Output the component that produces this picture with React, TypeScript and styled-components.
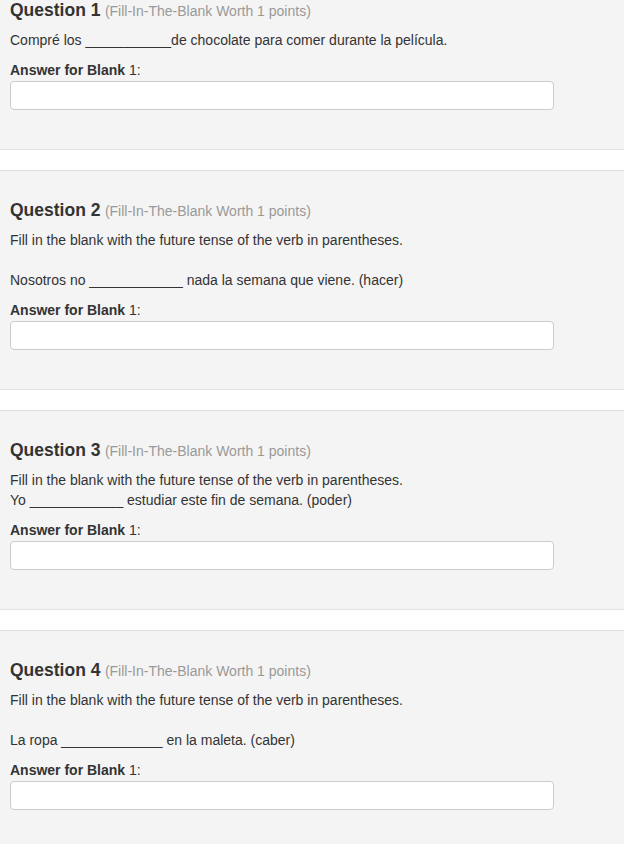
import { FC, ReactNode } from 'react';
import styled, { createGlobalStyle } from 'styled-components';

const GlobalStyle = createGlobalStyle`
  body {
    margin: 0;
    background: #ffffff;
    font-family: 'Liberation Sans', Arial, sans-serif;
    color: #333333;
  }
`;

const Page = styled.div`
  display: flex;
  flex-direction: column;
  gap: 20px;
`;

const Block = styled.section<{ $first?: boolean }>`
  background: #f4f4f4;
  border-top: ${(p) => (p.$first ? 'none' : '1px solid #dcdcdc')};
  border-bottom: 1px solid #e2e2e2;
  padding: ${(p) => (p.$first ? '0' : '29px')} 10px 39px;
  display: flex;
  flex-direction: column;
`;

const Heading = styled.div`
  line-height: 20px;
  height: 20px;
  white-space: nowrap;
`;

const QNumber = styled.span`
  font-size: 17.5px;
  font-weight: 700;
  color: #333333;
`;

const QMeta = styled.span`
  font-size: 14px;
  color: #999999;
`;

const Prompt = styled.div`
  margin-top: 10px;
  font-size: 14px;
  line-height: 20px;
  color: #333333;
`;

const Line = styled.p<{ $gap?: boolean }>`
  margin: 0;
  margin-top: ${(p) => (p.$gap ? '20px' : '0')};
  min-height: 20px;
`;

const Label = styled.div`
  margin-top: 10px;
  font-size: 14px;
  line-height: 20px;
  color: #333333;

  b {
    font-weight: 700;
  }
`;

const AnswerInput = styled.input`
  box-sizing: border-box;
  margin-top: 1px;
  width: 544px;
  height: 29px;
  border: 1px solid #cccccc;
  border-radius: 4px;
  background: #ffffff;
  padding: 4px 8px;
  font-family: inherit;
  font-size: 14px;
  outline: none;
`;

interface QuestionProps {
  num: number;
  first?: boolean;
  children: ReactNode;
}

const Question: FC<QuestionProps> = ({ num, first, children }) => (
  <Block $first={first}>
    <Heading>
      <QNumber>Question {num}</QNumber>{' '}
      <QMeta>(Fill-In-The-Blank Worth 1 points)</QMeta>
    </Heading>
    <Prompt>{children}</Prompt>
    <Label>
      <b>Answer for Blank</b> 1:
    </Label>
    <AnswerInput type="text" />
  </Block>
);

const instruction = 'Fill in the blank with the future tense of the verb in parentheses.';

export default function App() {
  return (
    <>
      <GlobalStyle />
      <Page>
        <Question num={1} first>
          <Line>Compré los ___________de chocolate para comer durante la película.</Line>
        </Question>
        <Question num={2}>
          <Line>{instruction}</Line>
          <Line $gap>Nosotros no ____________ nada la semana que viene. (hacer)</Line>
        </Question>
        <Question num={3}>
          <Line>{instruction}</Line>
          <Line>Yo ____________ estudiar este fin de semana. (poder)</Line>
        </Question>
        <Question num={4}>
          <Line>{instruction}</Line>
          <Line $gap>La ropa _____________ en la maleta. (caber)</Line>
        </Question>
      </Page>
    </>
  );
}
